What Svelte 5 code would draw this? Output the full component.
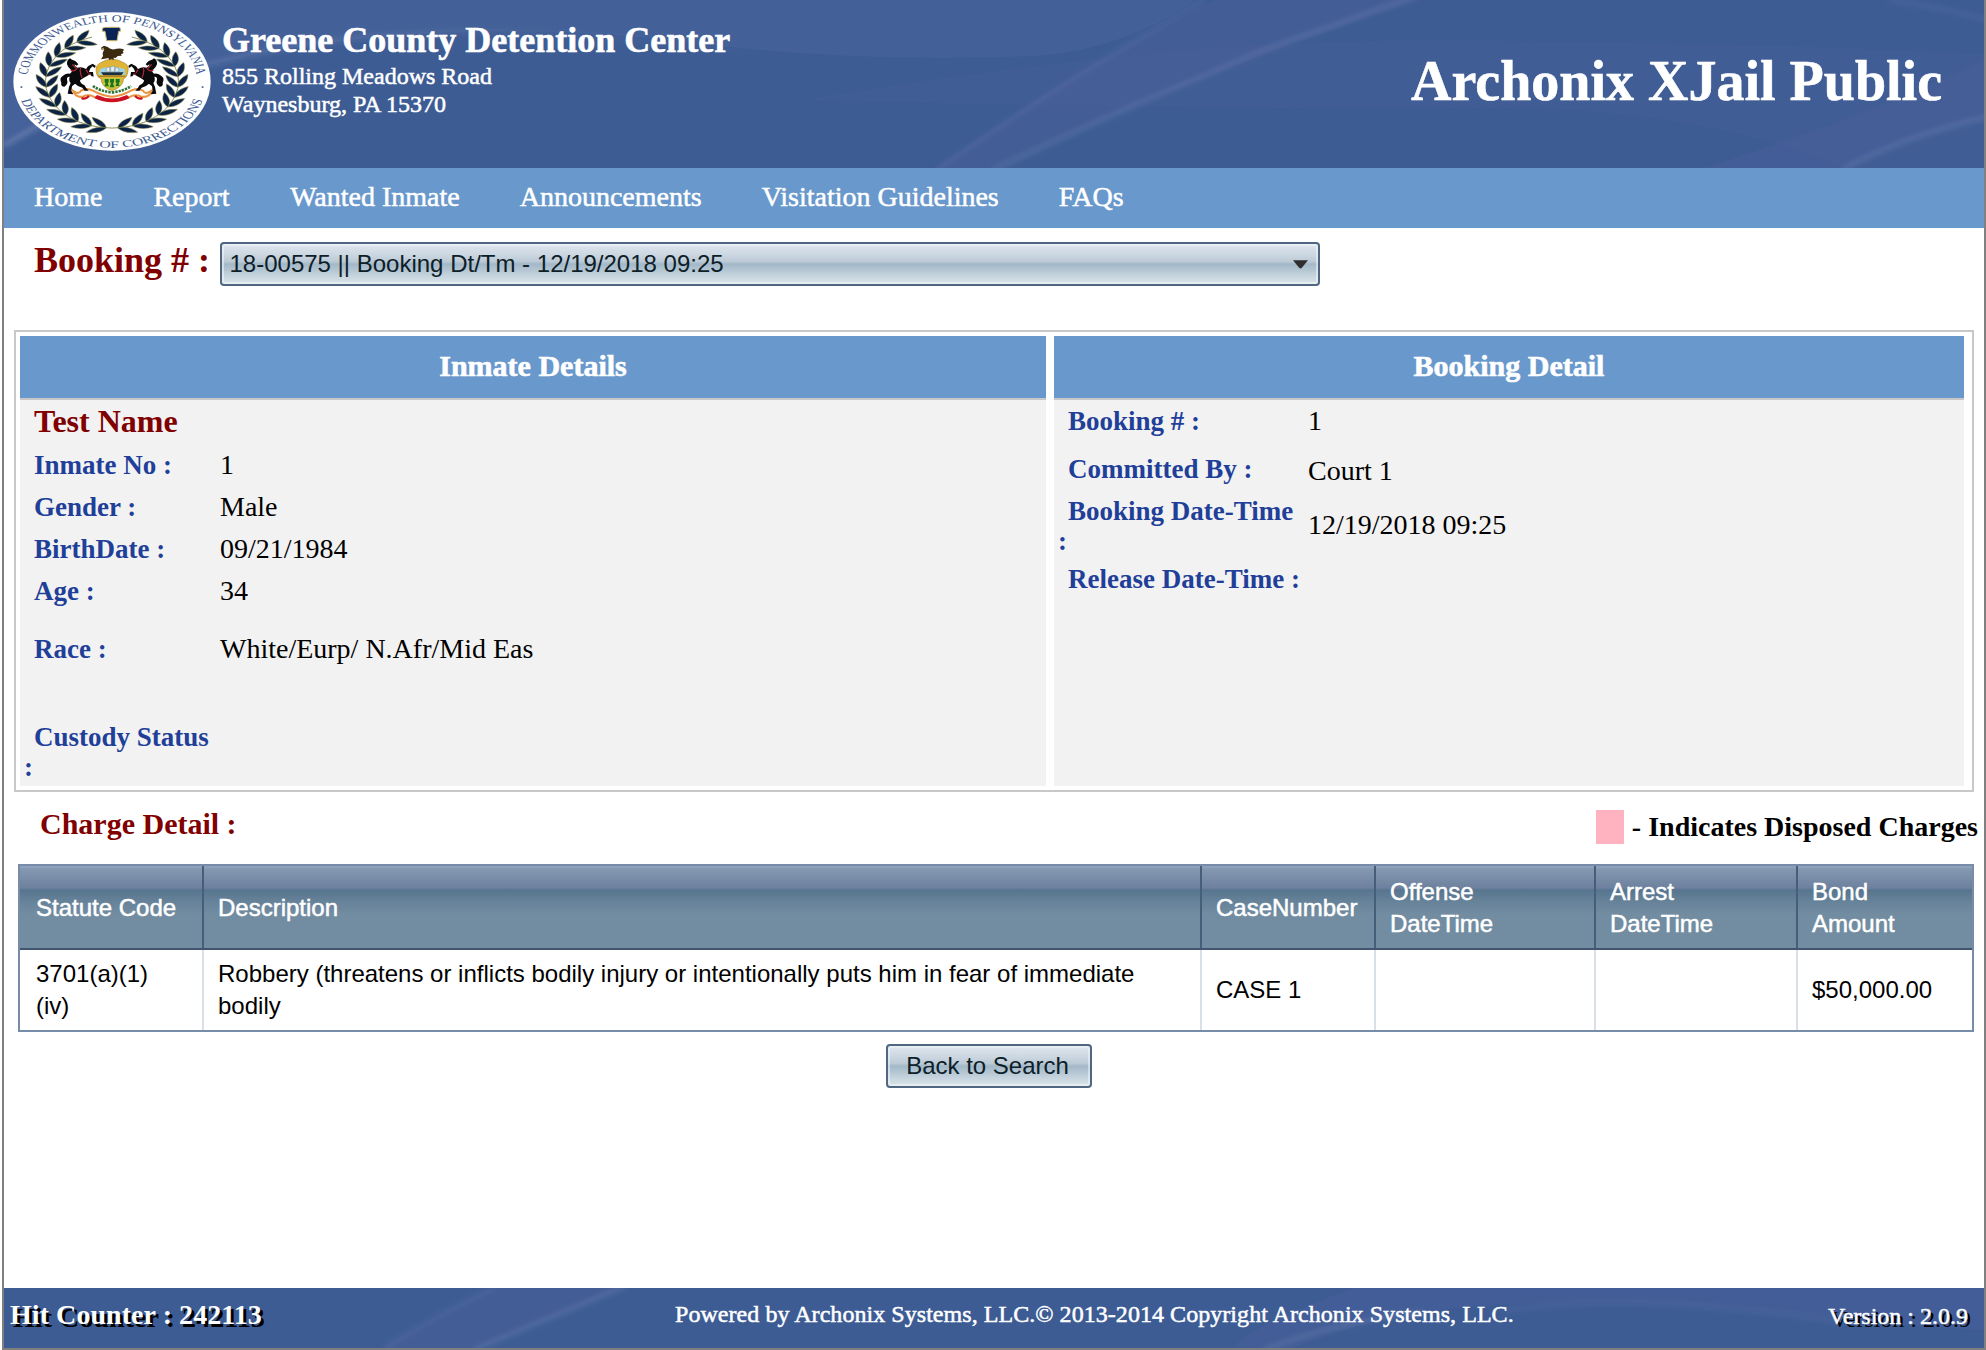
<script>
  const nav = ['Home', 'Report', 'Wanted Inmate', 'Announcements', 'Visitation Guidelines', 'FAQs'];

  const inmate = [
    { label: 'Inmate No :', value: '1' },
    { label: 'Gender :', value: 'Male' },
    { label: 'BirthDate :', value: '09/21/1984' },
    { label: 'Age :', value: '34' },
    { label: 'Race :', value: 'White/Eurp/ N.Afr/Mid Eas', kind: 'race' },
    { label: 'Custody Status :', value: '', kind: 'custody' },
  ];

  const booking = [
    { label: 'Booking # :', value: '1', kind: 'number' },
    { label: 'Committed By :', value: 'Court 1', kind: 'committed' },
    { label: 'Booking Date-Time :', value: '12/19/2018 09:25', kind: 'datetime' },
    { label: 'Release Date-Time :', value: '', kind: 'release' },
  ];

  const columns = ['Statute Code', 'Description', 'CaseNumber', 'Offense DateTime', 'Arrest DateTime', 'Bond Amount'];
  const charges = [
    [
      '3701(a)(1) (iv)',
      'Robbery (threatens or inflicts bodily injury or intentionally puts him in fear of immediate bodily',
      'CASE 1',
      '',
      '',
      '$50,000.00',
    ],
  ];

  // Laurel leaves: pairs along the left half of a circle, mirrored for the right half.
  const leaves = [];
  for (let i = 0; i < 12; i++) {
    const a = ((95 + i * 13) * Math.PI) / 180;
    const x = 100 + 67 * Math.cos(a);
    const y = 100 + 67 * Math.sin(a);
    const dir = (a * 180) / Math.PI + 90;
    leaves.push({ x, y, r: dir - 22 });
    leaves.push({ x, y, r: dir + 42 });
  }
</script>

<div class="page">
  <header>
    <svg class="swoosh" viewBox="0 0 1980 168" preserveAspectRatio="none" aria-hidden="true">
      <defs>
        <filter id="soft" x="-10%" y="-30%" width="120%" height="160%"><feGaussianBlur stdDeviation="2.4" /></filter>
        <linearGradient id="fadeDown" x1="0" y1="0" x2="0" y2="1">
          <stop offset="0" stop-color="#5a6fa8" stop-opacity=".2" />
          <stop offset="1" stop-color="#5a6fa8" stop-opacity=".3" />
        </linearGradient>
        <linearGradient id="fadeRight" gradientUnits="userSpaceOnUse" x1="0" y1="0" x2="780" y2="0">
          <stop offset="0" stop-color="#8fa2c8" stop-opacity=".4" />
          <stop offset=".3" stop-color="#8fa2c8" stop-opacity=".22" />
          <stop offset="1" stop-color="#8fa2c8" stop-opacity="0" />
        </linearGradient>
      </defs>
      <path d="M0 0H1190Q1120 50 1030 56Q860 62 720 46Q440 10 216 62Q90 90 0 146Z" fill="url(#fadeDown)" />
      <path d="M0 146Q90 90 216 62Q330 34 460 32Q600 32 780 56" class="glow fading" />
      <path d="M1416 0Q1200 70 989 168H932Q1080 62 1210 0Z" fill="#5a64a4" fill-opacity=".22" />
      <path d="M1412 -4Q1360 14 1325 27Q1250 52 1210 72Q1130 104 989 170" class="glow" />
      <path d="M1200 0Q1070 74 932 170" class="glow faint" />
      <path d="M800 100Q1150 40 1430 40Q1750 42 1980 54V168H1840Q1700 110 1500 108Q1150 110 800 100Z" fill="#5a64a4" fill-opacity=".13" />
      <path d="M1980 118Q1900 136 1840 168H1700Q1880 110 1980 60Z" fill="#5a64a4" fill-opacity=".18" />
      <path d="M1984 117Q1900 136 1838 170" class="glow" />
      <path d="M1885 0Q1940 8 1984 20" class="glow faint" />
    </svg>
    <svg class="seal" viewBox="0 0 594 417" role="img" aria-label="Department of Corrections seal">
      <defs>
        <path id="arcTop" d="M14 100A86 86 0 0 1 186 100" />
        <path id="arcBottom" d="M4.5 100A95.5 95.5 0 0 0 195.5 100" />
        <path id="leaf" d="M0 0C6 -4.6 14 -4 21 0C14 4 6 4.4 0 0Z" />
        <g id="laurel">
          <path d="M100 167A67 67 0 0 1 80 36" fill="none" stroke="#77803f" stroke-width="1" />
          {#each leaves as l}
            <use href="#leaf" transform="translate({l.x} {l.y}) rotate({l.r})" />
          {/each}
        </g>
        <g id="horse" transform="translate(141 53)">
          <path
            d="M30 86L36 90Q50 94 55 104L50 108L43 104Q44 112 52 114Q66 110 78 118L84 110L98 102L107 108L105 115L97 110L90 118L87 127L99 127L101 141L94 139L90 134L80 140Q68 146 60 152Q60 162 73 166L79 176L86 183L74 183L67 174L54 169L45 162L36 170L34 183L40 194L23 192L27 172L32 160Q25 152 29 141Q20 140 21 150Q26 162 13 171Q1 170 4 159Q-3 146 8 139Q17 129 30 132Q38 126 34 122Q24 114 21 104Q20 91 30 86Z"
            fill="#0a0a0c"
          />
          <path d="M37 104L48 116M32 121Q42 128 52 116M62 114Q58 126 66 144M78 120L84 130M84 133L93 134" fill="none" stroke="#b8273a" stroke-width="3.5" />
        </g>
      </defs>
      <ellipse cx="297" cy="208.5" rx="296" ry="207.5" fill="#fff" />
      <g transform="scale(2.97 2.085)">
        <g class="ring">
          <text textLength="250" lengthAdjust="spacingAndGlyphs"><textPath href="#arcTop" startOffset="50%">COMMONWEALTH OF PENNSYLVANIA</textPath></text>
          <text textLength="245" lengthAdjust="spacingAndGlyphs"><textPath href="#arcBottom" startOffset="50%">DEPARTMENT OF CORRECTIONS</textPath></text>
          <circle cx="8.5" cy="108" r="1.2" />
          <circle cx="191.5" cy="108" r="1.2" />
        </g>
        <g fill="#0c2347" stroke="#8b8c45" stroke-width=".6">
          <use href="#laurel" />
          <use href="#laurel" transform="translate(200 0) scale(-1 1)" />
        </g>
      </g>
      <path d="M276 46H317L322 49V58H317L312 86H281L276 58H268V49Z" fill="#0b2458" stroke="#c9b96a" stroke-width="3" />
      <!-- scroll -->
      <path d="M180 236Q198 250 204 236Q222 226 240 236Q268 252 297 254Q326 252 354 236Q372 226 390 236Q396 250 416 236Q410 258 384 254Q370 246 352 254Q326 266 297 266Q268 266 242 254Q224 246 210 254Q188 258 180 236Z" fill="#fff" stroke="#ea9440" stroke-width="6" />
      <path d="M252 249Q297 270 342 249L350 258Q297 284 244 258Z" fill="#cc1122" />
      <path d="M206 258Q216 264 228 252M388 258Q378 264 366 252" fill="none" stroke="#cc1122" stroke-width="7" />
      <!-- supporters -->
      <use href="#horse" />
      <use href="#horse" transform="translate(594 0) scale(-1 1)" />
      <!-- shield -->
      <path d="M240 222Q262 238 296 241Q332 238 354 222" fill="none" stroke="#2b7636" stroke-width="8" stroke-dasharray="7 3" />
      <path d="M262 153Q297 130 334 153Q350 160 344 182Q342 196 332 200Q330 226 297 236Q266 226 264 200Q252 196 250 182Q246 160 262 153Z" fill="#e0b437" stroke="#a8842a" stroke-width="2" />
      <path d="M262 171Q297 158 334 171L338 188H256Z" fill="#9bd5e6" />
      <path d="M264 181H332L325 190H271Z" fill="#1d2f3d" />
      <path d="M280 179V168L290 165V179ZM293 179V164L304 162V179ZM307 179V167L317 169V179Z" fill="#e8edf0" stroke="#51626e" stroke-width="1" />
      <path d="M256 193H338" stroke="#a8842a" stroke-width="4" />
      <path d="M270 198H325V218Q312 230 297 232Q282 230 270 218Z" fill="#c4c43b" />
      <path d="M275 201H287V209L284 215L288 223H274L278 215L275 209ZM291 201H303V209L300 215L304 226H290L294 215L291 209ZM308 201H320V209L317 215L320 222H307L311 215L308 209Z" fill="#16731f" />
      <!-- eagle -->
      <path d="M264 107L273 101L284 105Q293 114 304 112Q320 106 334 113L329 118L332 123L324 127L326 131L314 132L308 138L302 137L302 145L296 141L289 144L286 138Q276 140 264 142L270 132Q267 122 274 112L266 113Z" fill="#3a2b10" />
      <path d="M272 107L264 109L272 112Z" fill="#d8b64e" />
    </svg>
    <div class="facility">
      <h1>Greene County Detention Center</h1>
      <p>855 Rolling Meadows Road</p>
      <p>Waynesburg, PA 15370</p>
    </div>
    <div class="product">Archonix XJail Public</div>
  </header>

  <nav>
    {#each nav as item}
      <a href="#top">{item}</a>
    {/each}
  </nav>

  <main>
    <div class="picker">
      <span class="picker-label">Booking # :</span>
      <div class="select glossy">
        <span>18-00575 || Booking Dt/Tm - 12/19/2018 09:25</span>
        <svg width="15" height="9" viewBox="0 0 16 9"><path d="M0 0H16L9 8.5H7Z" fill="#2e2e2e" /></svg>
      </div>
    </div>

    <div class="panels">
      <section>
        <h2>Inmate Details</h2>
        <div class="body">
          <div class="name">Test Name</div>
          {#each inmate as row}
            <div class="row {row.kind ?? ''}">
              <div class="label">{row.label}</div>
              <div class="value">{row.value}</div>
            </div>
          {/each}
        </div>
      </section>
      <section class="booking">
        <h2>Booking Detail</h2>
        <div class="body">
          {#each booking as row}
            <div class="row {row.kind}">
              <div class="label">{row.label}</div>
              <div class="value">{row.value}</div>
            </div>
          {/each}
        </div>
      </section>
    </div>

    <div class="charge-bar">
      <h3>Charge Detail :</h3>
      <div class="legend"><i></i><span>- Indicates Disposed Charges</span></div>
    </div>

    <div class="grid">
      <div class="grid-row head">
        {#each columns as c}
          <div class="cell">{c}</div>
        {/each}
      </div>
      {#each charges as charge}
        <div class="grid-row">
          {#each charge as v}
            <div class="cell">{v}</div>
          {/each}
        </div>
      {/each}
    </div>

    <button class="glossy">Back to Search</button>
  </main>

  <footer>
    <svg class="swoosh" viewBox="0 0 1980 60" preserveAspectRatio="none" aria-hidden="true">
      <path d="M618 0Q560 24 476 60H380Q440 22 490 0Z" fill="#5a64a4" fill-opacity=".22" />
      <path d="M622 -2Q560 24 470 62" class="glow" />
      <path d="M490 0Q440 22 380 60" class="glow faint" />
      <path d="M1290 60Q1390 16 1560 14Q1700 12 1850 32Q1920 40 1980 42V0H1350Q1240 40 1230 60Z" fill="#5a64a4" fill-opacity=".2" />
      <path d="M1260 62Q1330 34 1420 24" class="glow" />
      <path d="M1500 22Q1580 12 1660 16Q1760 22 1840 34" class="glow faint" />
    </svg>
    <strong class="hits">Hit Counter : 242113</strong>
    <span class="powered">Powered by Archonix Systems, LLC.© 2013-2014 Copyright Archonix Systems, LLC.</span>
    <span class="version">Version : 2.0.9</span>
  </footer>
</div>

<style>
  :global(body) {
    background: #fff;
  }
  h1,
  h2,
  h3,
  p {
    margin: 0;
  }
  .page {
    box-sizing: border-box;
    width: 1984px;
    height: 1350px;
    margin-left: 2px;
    border: solid #808080;
    border-width: 0 2px 2px;
    display: flex;
    flex-direction: column;
    font-family: 'Liberation Serif', 'Times New Roman', serif;
    font-size: 28px;
    white-space: nowrap;
    color: #000;
  }
  header,
  footer {
    position: relative;
    overflow: hidden;
    display: flex;
    flex: none;
    color: #fff;
    background: #3d5c94;
  }
  header {
    height: 168px;
  }
  .swoosh {
    position: absolute;
    inset: 0;
    width: 100%;
    height: 100%;
  }
  .swoosh .glow {
    fill: none;
    stroke: #8195c0;
    stroke-opacity: 0.24;
    stroke-width: 5;
    filter: url(#soft);
  }
  .swoosh .faint {
    stroke-opacity: 0.13;
  }
  .swoosh .fading {
    stroke: url(#fadeRight);
    stroke-opacity: 1;
  }
  .seal {
    position: relative;
    flex: none;
    width: 198px;
    height: 139px;
    margin: 12px 0 0 9px;
  }
  .ring {
    fill: #3c5a91;
    font-size: 14.5px;
    text-anchor: middle;
  }
  .facility {
    position: relative;
    margin: 20px 0 0 11px;
    font-size: 24px;
    line-height: 28px;
  }
  .facility p,
  .powered,
  .version,
  nav a {
    -webkit-text-stroke: 0.5px #fff;
  }
  .facility h1 {
    font-size: 36px;
    line-height: 40px;
    margin-bottom: 2px;
  }
  .facility h1,
  .product,
  h2 {
    -webkit-text-stroke: 0.6px #fff;
  }
  .product {
    position: relative;
    margin: 49px 42px 0 auto;
    font-size: 56px;
    line-height: 64px;
    font-weight: bold;
  }
  nav {
    display: flex;
    flex: none;
    gap: 60px;
    height: 60px;
    padding-left: 30px;
    background: #6998cc;
    line-height: 57px;
  }
  nav a {
    color: #fff;
    text-decoration: none;
  }
  nav a:first-child {
    margin-right: -9px;
  }
  nav a:nth-child(2) {
    margin-right: 0.5px;
  }
  main {
    flex: 1;
    display: flex;
    flex-direction: column;
  }
  .picker {
    display: flex;
    align-items: flex-start;
    padding: 14px 0 0 30px;
    height: 88px;
    box-sizing: border-box;
  }
  .picker-label {
    width: 186px;
    color: #800000;
    font-size: 36px;
    font-weight: bold;
    line-height: 36px;
  }
  .glossy {
    box-sizing: border-box;
    height: 44px;
    border: 2px solid #4f6780;
    border-radius: 4px;
    box-shadow: inset 0 0 0 2px rgba(240, 246, 250, 0.55);
    background: linear-gradient(#dfe6ee 0%, #cdd8e2 25%, #bccad6 44%, #a3b8c8 50%, #aec1cf 60%, #c6d4de 80%, #dbe5e8 100%);
    font: 24px/40px 'Liberation Sans', Arial, sans-serif;
    color: #0d2028;
  }
  .select {
    display: flex;
    justify-content: space-between;
    align-items: center;
    width: 1100px;
    padding: 0 10px 0 7.5px;
  }
  .panels {
    display: grid;
    grid-template-columns: 1026px 910px;
    gap: 8px;
    box-sizing: border-box;
    width: 1960px;
    height: 462px;
    margin: 14px 0 0 10px;
    padding: 4px;
    border: 2px solid #c8c8c8;
  }
  section {
    display: flex;
    flex-direction: column;
  }
  h2 {
    height: 62px;
    border-bottom: 2px solid #c8c8c8;
    background: #6998cc;
    color: #fff;
    font-size: 30px;
    line-height: 60px;
    text-align: center;
  }
  .body {
    flex: 1;
    background: #f2f2f2;
    padding-left: 4px;
  }
  .name {
    padding-left: 10px;
    color: #800000;
    font-size: 32px;
    font-weight: bold;
    line-height: 43px;
    height: 44px;
  }
  .row {
    display: grid;
    grid-template-columns: 190px 1fr;
    column-gap: 6px;
    align-items: center;
    height: 42px;
    line-height: 30px;
  }
  .booking .row {
    grid-template-columns: 244px 1fr;
  }
  .label {
    font-size: 27px;
    font-weight: bold;
    color: #1f3f99;
    text-indent: 10px;
    white-space: normal;
  }
  .race {
    height: 74px;
  }
  .custody {
    height: 68px;
    padding-top: 32px;
  }
  .committed {
    height: 54px;
  }
  .committed .value {
    padding-top: 3px;
  }
  .datetime {
    height: 60px;
  }
  .datetime .value {
    padding-bottom: 2px;
  }
  .release {
    height: 46px;
  }
  .charge-bar {
    display: flex;
    justify-content: space-between;
    height: 72px;
    padding: 0 6px 0 36px;
  }
  h3 {
    color: #800000;
    font-size: 30px;
    line-height: 64px;
  }
  .legend {
    display: flex;
    gap: 8px;
    font-weight: bold;
    line-height: 69px;
  }
  .legend i {
    width: 28px;
    height: 34px;
    margin-top: 18px;
    background: #ffb3c0;
  }
  .grid {
    box-sizing: border-box;
    width: 1956px;
    margin-left: 14px;
    border: 2px solid #768ca8;
    font: 24px/32px 'Liberation Sans', Arial, sans-serif;
  }
  .grid-row {
    display: grid;
    grid-template-columns: 182px 998px 174px 220px 202px 176px;
    height: 80px;
  }
  .cell {
    display: flex;
    align-items: center;
    padding: 0 14px;
    border-left: 2px solid #d9e0e6;
    white-space: normal;
  }
  .cell:first-child {
    border-left-color: transparent;
    padding-right: 20px;
  }
  .cell:nth-child(n + 4) {
    padding-right: 60px;
  }
  .cell:last-child {
    padding-right: 20px;
  }
  .head {
    height: 82px;
    border-bottom: 2px solid #3f5570;
    color: #fff;
    -webkit-text-stroke: 0.5px #fff;
    background: linear-gradient(#93a6be 0, #8498b1 3px, #6d819e 22px, #57758e 24px, #67839a 36px, #728ca1 48px, #728ca1 100%);
  }
  .head .cell {
    padding-top: 2px;
    border-left-color: #455f7a;
  }
  .head .cell:first-child {
    border-left-color: transparent;
  }
  .head .cell:last-child {
    padding-right: 60px;
  }
  button.glossy {
    width: 206px;
    margin: 12px 0 0 882px;
    padding: 0 3px 0 0;
  }
  footer {
    height: 60px;
  }
  footer strong,
  footer span {
    position: relative;
  }
  .hits {
    width: 665px;
    padding-left: 6px;
    line-height: 54px;
    letter-spacing: 0.06px;
    text-shadow: 3px 3px 0 #000;
  }
  .powered {
    font-size: 24px;
    line-height: 52px;
    letter-spacing: 0.05px;
  }
  .version {
    margin: 0 16px 0 auto;
    font-size: 24px;
    line-height: 56px;
    text-shadow: 3px 3px 0 #000;
  }
</style>
